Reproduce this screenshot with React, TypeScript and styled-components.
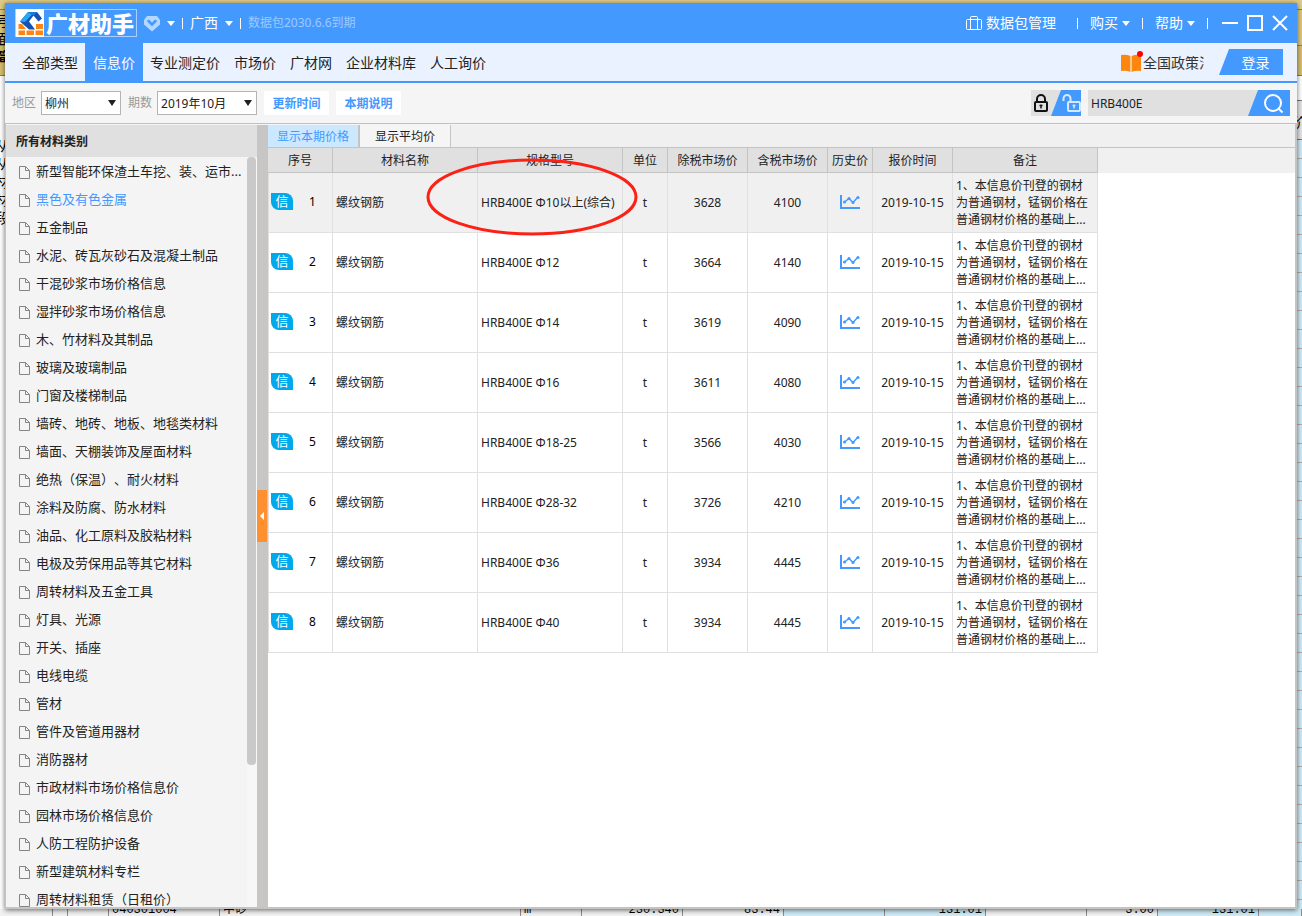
import React from "react";
import styled, { createGlobalStyle, css } from "styled-components";

const blue = "#4499ff";
const ink = "#222222";

const GlobalStyle = createGlobalStyle`
  * { box-sizing: border-box; }
  body {
    margin: 0;
    color: ${ink};
    font: 12px/16px "Noto Sans", "Noto Sans CJK SC", sans-serif;
    text-spacing-trim: space-all;
  }
  button, input, select { font: inherit; color: inherit; }
  button { border: 0; padding: 0; background: none; cursor: pointer; white-space: nowrap; }
`;

/* ---------- desktop behind the window ---------- */

const Desktop = styled.div`
  display: grid;
  grid-template: 3px minmax(0, 1fr) 7px / 5px minmax(0, 1fr) 5px;
  height: 100vh;
  overflow: hidden;
  background: #ffffff;
`;

const TopEdge = styled.div`
  grid-column: 1 / -1;
  background: #dfcb85;
`;

const SideEdge = styled.div`
  display: flex;
  flex-direction: column;
  overflow: hidden;
`;

const GoldPatch = styled.div`
  height: 73px;
  background: linear-gradient(#e0cc85 6px, #8d8262 6px 7px, #dcc67c 7px 42px, #8d8262 42px 43px, #d5bd6e 43px);
  border-bottom: 1px solid #777777;
`;

const EdgeGlyphs = styled.div<{ $space: number }>`
  display: flex;
  flex-direction: column;
  align-items: center;
  padding-top: ${(p) => p.$space}px;
  font: 14px/18px "Noto Sans CJK SC", sans-serif;
  color: #000000;
`;

const SheetHead = styled.div`
  height: 64px;
  overflow: hidden;
  background: linear-gradient(#ffffff 24px, #777777 24px 25px, #e4e4e4 25px);
  border-bottom: 1px solid #777777;
`;

const SheetRows = styled.div`
  flex: 1;
  background: repeating-linear-gradient(#cdebf6 0 18px, #b5adad 18px 19px);
`;

const SheetBottom = styled.div`
  grid-column: 1 / -1;
  display: grid;
  grid-template-columns: 53px 15px 41px 111px 301px 61px repeat(5, 101px) 71px 101px 1fr;
  overflow: hidden;
`;

const SheetCell = styled.div<{ $tint?: boolean; $right?: boolean }>`
  display: flex;
  align-items: flex-end;
  justify-content: ${(p) => (p.$right ? "flex-end" : "flex-start")};
  min-width: 0;
  height: 7px;
  padding: 0 3px;
  border-right: 1px solid #8c8c8c;
  background: ${(p) => (p.$tint ? "#cdebf6" : "#f2f2f2")};
  color: #000000;
  font: 12px/12px "Liberation Mono", "Noto Sans CJK SC", monospace;
  white-space: nowrap;
`;

/* ---------- window ---------- */

const Window = styled.div`
  position: relative;
  z-index: 1;
  display: flex;
  flex-direction: column;
  min-height: 0;
  background: #f5f5f5;
  box-shadow: 0 1px 5px rgba(0, 0, 0, 0.6);
`;

const TitleBar = styled.header`
  display: flex;
  align-items: center;
  justify-content: space-between;
  flex: none;
  height: 40px;
  padding: 0 9px 0 10px;
  background: ${blue};
  color: #ffffff;
`;

const BarGroup = styled.div<{ $gap: number }>`
  display: flex;
  align-items: center;
  gap: ${(p) => p.$gap}px;
`;

const Brand = styled.div`
  display: flex;
  align-items: center;
  width: 122px;
  height: 28px;
  border: 1px solid #a9d0ff;
  font: 900 22px/26px "Noto Sans CJK SC", sans-serif;
  white-space: nowrap;

  svg { flex: none; margin-right: 2px; }
  span { padding-bottom: 3px; }
`;

const Divider = styled.span`
  width: 1px;
  height: 11px;
  background: #ffffff;
`;

const TitleButton = styled.button`
  display: flex;
  align-items: center;
  gap: 4px;
  font-size: 14px;
  line-height: 20px;
`;

const RegionButton = styled(TitleButton)`
  gap: 7px;
`;

const PackageButton = styled(TitleButton)`
  padding-right: 9px;
`;

const WindowControls = styled.div`
  display: flex;
  gap: 9px;
  padding-left: 2px;
`;

const Expiry = styled.span`
  color: #9ccaff;
  white-space: nowrap;
`;

const Caret = styled.span`
  border: 4px solid transparent;
  border-top: 5px solid currentColor;
  border-bottom: 0;
`;

const NavBar = styled.nav`
  display: flex;
  align-items: center;
  justify-content: space-between;
  flex: none;
  height: 40px;
  padding: 0 14px 0 10px;
  border-bottom: 2px solid ${blue};
  background: #ebf2ff;
`;

const NavList = styled.div`
  display: flex;
  align-self: stretch;
`;

const NavItem = styled.button<{ $active?: boolean }>`
  padding: 1px 7px 0;
  font-size: 14px;
  line-height: 20px;
  ${(p) =>
    p.$active &&
    css`
      padding: 1px 8px 0;
      background: ${blue};
      color: #ffffff;
    `}
`;

const PolicyLink = styled.a`
  display: flex;
  align-items: center;
  color: #333333;
  font-size: 14px;
  line-height: 20px;
  text-decoration: none;

  span { width: 61px; padding-top: 1px; overflow: hidden; white-space: nowrap; }
`;

const LoginButton = styled.button`
  width: 64px;
  height: 26px;
  padding: 2px 0 0 9px;
  background: ${blue};
  clip-path: polygon(10px 0, 100% 0, 100% 100%, 0 100%);
  color: #ffffff;
  font-size: 14px;
`;

const FilterBar = styled.div`
  display: flex;
  align-items: center;
  justify-content: space-between;
  flex: none;
  height: 41px;
  padding: 0 7px;
  border-bottom: 1px solid #c0c0c0;
`;

const Field = styled.label`
  display: flex;
  align-items: center;
  gap: 5px;
  color: #999999;
`;

const SelectBox = styled.span<{ $width: number }>`
  display: grid;
  align-items: center;
  width: ${(p) => p.$width}px;
  color: ${ink};

  > * { grid-area: 1 / 1; }
  > ${Caret} { justify-self: end; margin-right: 5px; pointer-events: none; border-top-width: 6px; }

  select {
    width: 100%;
    height: 24px;
    padding: 2px 3px 0;
    border: 1px solid #b4b4b4;
    border-radius: 0;
    background: #ffffff;
    appearance: none;
  }
`;

const FlatButton = styled.button`
  width: 65px;
  height: 24px;
  padding-top: 2px;
  background: #ffffff;
  color: ${blue};
  font-weight: 700;
`;

const LockSwitch = styled.div`
  display: flex;
  height: 26px;
  background: #e0e0e0;
`;

const LockButton = styled.button<{ $on?: boolean }>`
  display: flex;
  align-items: center;
  width: ${(p) => (p.$on ? 30 : 20)}px;
  padding-left: ${(p) => (p.$on ? 11 : 3)}px;
  ${(p) =>
    p.$on &&
    css`
      background: ${blue};
      clip-path: polygon(10px 0, 100% 0, 100% 100%, 0 100%);
    `}
`;

const SearchBox = styled.form`
  display: flex;
  width: 202px;
  height: 26px;
  background: #e0e0e0;

  input {
    flex: 1;
    min-width: 0;
    padding: 2px 3px 0;
    border: 0;
    background: transparent;
  }

  button {
    display: flex;
    align-items: center;
    width: 42px;
    padding: 2px 0 0 16px;
    background: ${blue};
    clip-path: polygon(10px 0, 100% 0, 100% 100%, 0 100%);
  }
`;

/* ---------- body ---------- */

const Body = styled.div`
  display: flex;
  flex: 1;
  min-height: 0;
  padding-top: 1px;
  border: solid #c4c4c4;
  border-width: 0 2px 2px 1px;
`;

const Sidebar = styled.aside`
  display: flex;
  flex-direction: column;
  flex: none;
  width: 251px;
  background: #f4f4f4;
`;

const SidebarTitle = styled.h2`
  flex: none;
  margin: 0;
  padding: 2px 10px 0;
  background: #e0e0e0;
  font-size: 12px;
  line-height: 30px;
`;

const SidebarBody = styled.div`
  display: flex;
  flex: 1;
  min-height: 0;
`;

const CategoryList = styled.ul`
  flex: 1;
  margin: 0;
  padding: 0;
  overflow: hidden;
  list-style: none;
`;

const Category = styled.button<{ $active?: boolean }>`
  display: flex;
  align-items: center;
  gap: 6px;
  width: 100%;
  height: 28px;
  padding-left: 13px;
  color: ${(p) => (p.$active ? blue : ink)};
  font-size: 13px;
  line-height: 18px;

  svg { flex: none; margin-top: 2px; }
`;

const ScrollTrack = styled.div`
  width: 10px;
  padding-right: 1px;
  background: #f7f7f7;

  &::before {
    content: "";
    display: block;
    height: 81%;
    border-radius: 4px;
    background: #c9c9c9;
  }
`;

const Splitter = styled.div`
  display: flex;
  align-items: center;
  flex: none;
  width: 11px;
  background: #c8c6c4;

  button {
    display: flex;
    align-items: center;
    justify-content: center;
    width: 10px;
    height: 52px;
    background: #ff9030;
  }
`;

const Content = styled.main`
  display: flex;
  flex-direction: column;
  flex: 1;
  min-width: 0;
  background: #ffffff;
`;

const TabRow = styled.div`
  display: flex;
  flex: none;
  height: 23px;
  border-bottom: 1px solid #c4c4c4;
  background: #f0f0f0;
`;

const Tab = styled.button<{ $active?: boolean }>`
  width: ${(p) => (p.$active ? 92 : 91)}px;
  padding-top: 2px;
  border-right: ${(p) => (p.$active ? 2 : 1)}px solid #c4c4c4;
  background: ${(p) => (p.$active ? "#cce8ff" : "#f5f5f5")};
  color: ${(p) => (p.$active ? blue : ink)};
`;

const TableArea = styled.div`
  position: relative;
  flex: 1;
  min-height: 0;
  background: linear-gradient(#f0f0f0 25px, #ffffff 25px);
`;

const Table = styled.table`
  table-layout: fixed;
  width: 830px;
  border-spacing: 0;

  th {
    height: 25px;
    padding: 2px 0 0;
    border: solid #c4c4c4;
    border-width: 0 1px 1px 0;
    background: #e0e0e0;
    font-weight: 400;
  }

  td {
    height: 60px;
    padding: 0;
    border: solid #e0e0e0;
    border-width: 0 1px 1px 0;
    text-align: center;
  }

  td:first-child { border-left-width: 1px; }
`;

const Row = styled.tr<{ $selected?: boolean }>`
  background: ${(p) => (p.$selected ? "#f0f0f0" : "#ffffff")};
`;

const TextCell = styled.td`
  && { padding-left: 3px; text-align: left; }
`;

const NoteCell = styled.td`
  && { padding: 0 6px 0 3px; text-align: left; line-height: 17px; }
`;

const Sequence = styled.div`
  display: flex;
  align-items: center;
  gap: 16px;
  padding: 0 0 2px 2px;
  color: #000000;
`;

const Badge = styled.span`
  width: 22px;
  height: 17px;
  border-radius: 0 8px 0 8px;
  background: #00a8ec;
  color: #ffffff;
  font-size: 13px;
  line-height: 17px;
`;

const ChartButton = styled.button`
  display: block;
  height: 16px;
  margin: 0 auto;
  padding-bottom: 2px;

  svg { display: block; }
`;

const Annotation = styled.svg`
  position: absolute;
  left: 158px;
  top: 9px;
  pointer-events: none;
`;

/* ---------- drawings ---------- */

const LogoMark = () => (
  <svg width="28" height="28" viewBox="0 0 28 28" aria-hidden="true">
    <rect width="28" height="28" fill="#fff" />
    <path d="M2.5 15H6l4 5H2.5zM20 15h7v5h-7zM2.5 21.5H9V26H2.5zM10.5 21.5H18V26h-7.500zM19.500 21.500H27V26h-7.500z" fill="#ff8416" />
    <path d="M4 12.500 12 3h9l5 6.500-3.500 3-5-6-4.500 6 6 8h-6z" fill="#1453b0" />
    <path d="M4 12.500 12 3l4 2.500L9 13z" fill="#29a7f5" />
    <path d="M12 3h9l-3.500 3.500L16 5.500z" fill="#2277dd" />
  </svg>
);

const VipIcon = () => (
  <svg width="16" height="17" viewBox="0 0 16 17" aria-hidden="true">
    <path d="M3 1h10l3 4v4.500L8 16.500 0 9.500V5z" fill="#b4d7ff" />
    <path d="M4.500 6 8 9.500 11.500 6" fill="none" stroke={blue} strokeWidth="2.500" strokeLinecap="round" />
  </svg>
);

const BagIcon = () => (
  <svg width="16" height="16" viewBox="0 0 16 16" fill="none" stroke="#fff" aria-hidden="true">
    <rect x=".5" y="4.500" width="15" height="10" rx="1" />
    <path d="M4.500 14.500V2.500q0-1 1-1h5q1 0 1 1v12" />
  </svg>
);

const BookIcon = () => (
  <svg width="22" height="22" viewBox="0 0 22 22" aria-hidden="true">
    <path d="M0 4q5-1 9.500 1v16Q5 19 0 20zM10.500 5Q15 3 20 4v16q-5-1-9.500 1z" fill="#ff860d" />
    <path d="M9.500 5h1v16h-1z" fill="#ffd2a0" />
    <circle cx="19" cy="3" r="3" fill="#f00" />
  </svg>
);

const LockIcon = () => (
  <svg width="14" height="18" viewBox="0 0 14 18" fill="none" stroke="#111" strokeWidth="2" aria-hidden="true">
    <rect x="1" y="8" width="12" height="9" rx="1" />
    <path d="M3 8V5a4 4 0 0 1 8 0v3" />
    <path d="M7 10.500v4M5.500 11.500h3" strokeWidth="1.500" />
  </svg>
);

const UnlockIcon = () => (
  <svg width="19" height="18" viewBox="0 0 19 18" fill="none" stroke="#d6e9ff" strokeWidth="2" aria-hidden="true">
    <rect x="6" y="8" width="12" height="9" rx="1" />
    <path d="M1.500 7V4.500a3.500 3.500 0 0 1 7 0V8" />
    <path d="M12 10.500v4M10.500 11.500h3" strokeWidth="1.500" />
  </svg>
);

const SearchIcon = () => (
  <svg width="20" height="20" viewBox="0 0 20 20" fill="none" stroke="#fff" strokeWidth="2" aria-hidden="true">
    <circle cx="9" cy="9" r="8" />
    <path d="m14.500 14.500 4 4" />
  </svg>
);

const FileIcon = () => (
  <svg width="11" height="13" viewBox="0 0 11 13" fill="none" stroke="#858585" aria-hidden="true">
    <path d="M.5.5h6l4 4v8H.5z" />
    <path d="M6.500.5v4h4" />
  </svg>
);

const ChartIcon = () => (
  <svg width="20" height="14" viewBox="0 0 20 14" fill="none" stroke={blue} aria-hidden="true">
    <path d="M1 0v13h19" strokeWidth="2" />
    <path d="m4.500 7 4.500-3.500L13 7.500 18 2" strokeWidth="1.500" />
    <g fill={blue} stroke="none">
      <circle cx="4.500" cy="7" r="1.500" />
      <circle cx="9" cy="3.500" r="1.500" />
      <circle cx="13" cy="7.500" r="1.500" />
      <circle cx="18" cy="2.500" r="1.500" />
    </g>
  </svg>
);

const WindowIcon = ({ d }: { d: string }) => (
  <svg width="16" height="16" viewBox="0 0 16 16" fill="none" stroke="#fff" strokeWidth="2" aria-hidden="true">
    <path d={d} />
  </svg>
);

/* ---------- data ---------- */

const navItems = ["全部类型", "信息价", "专业测定价", "市场价", "广材网", "企业材料库", "人工询价"];

const categories = [
  "新型智能环保渣土车挖、装、运市...",
  "黑色及有色金属",
  "五金制品",
  "水泥、砖瓦灰砂石及混凝土制品",
  "干混砂浆市场价格信息",
  "湿拌砂浆市场价格信息",
  "木、竹材料及其制品",
  "玻璃及玻璃制品",
  "门窗及楼梯制品",
  "墙砖、地砖、地板、地毯类材料",
  "墙面、天棚装饰及屋面材料",
  "绝热（保温）、耐火材料",
  "涂料及防腐、防水材料",
  "油品、化工原料及胶粘材料",
  "电极及劳保用品等其它材料",
  "周转材料及五金工具",
  "灯具、光源",
  "开关、插座",
  "电线电缆",
  "管材",
  "管件及管道用器材",
  "消防器材",
  "市政材料市场价格信息价",
  "园林市场价格信息价",
  "人防工程防护设备",
  "新型建筑材料专栏",
  "周转材料租赁（日租价）",
];

const columns: [string, number][] = [
  ["序号", 65],
  ["材料名称", 145],
  ["规格型号", 145],
  ["单位", 45],
  ["除税市场价", 80],
  ["含税市场价", 80],
  ["历史价", 45],
  ["报价时间", 80],
  ["备注", 145],
];

const rows: [string, number, number][] = [
  ["HRB400E Φ10以上(综合)", 3628, 4100],
  ["HRB400E Φ12", 3664, 4140],
  ["HRB400E Φ14", 3619, 4090],
  ["HRB400E Φ16", 3611, 4080],
  ["HRB400E Φ18-25", 3566, 4030],
  ["HRB400E Φ28-32", 3726, 4210],
  ["HRB400E Φ36", 3934, 4445],
  ["HRB400E Φ40", 3934, 4445],
];

const note = "1、本信息价刊登的钢材为普通钢材，锰钢价格在普通钢材价格的基础上...";

export default function App() {
  return (
    <>
      <GlobalStyle />
      <Desktop>
        <TopEdge />
        <SideEdge aria-hidden="true">
          <GoldPatch>
            <EdgeGlyphs $space={8}>
              <span>号</span>
              <span>面</span>
              <b>简</b>
            </EdgeGlyphs>
          </GoldPatch>
          <EdgeGlyphs $space={60}>
            <span>从</span>
            <span>从</span>
            <span>材</span>
            <span>材</span>
            <span>段</span>
          </EdgeGlyphs>
        </SideEdge>

        <Window>
          <TitleBar>
            <BarGroup $gap={7}>
              <Brand>
                <LogoMark />
                <span>广材助手</span>
              </Brand>
              <VipIcon />
              <Caret />
              <Divider />
              <RegionButton>
                广西 <Caret />
              </RegionButton>
              <Divider />
              <Expiry>数据包2030.6.6到期</Expiry>
            </BarGroup>
            <BarGroup $gap={12}>
              <PackageButton>
                <BagIcon />
                数据包管理
              </PackageButton>
              <Divider />
              <TitleButton>
                购买 <Caret />
              </TitleButton>
              <Divider />
              <TitleButton>
                帮助 <Caret />
              </TitleButton>
              <Divider />
              <WindowControls>
                <TitleButton aria-label="最小化">
                  <WindowIcon d="M0 8h16" />
                </TitleButton>
                <TitleButton aria-label="最大化">
                  <WindowIcon d="M1 1h14v14H1z" />
                </TitleButton>
                <TitleButton aria-label="关闭">
                  <WindowIcon d="m1 1 14 14M15 1 1 15" />
                </TitleButton>
              </WindowControls>
            </BarGroup>
          </TitleBar>

          <NavBar>
            <NavList>
              {navItems.map((item) => (
                <NavItem key={item} $active={item === "信息价"}>
                  {item}
                </NavItem>
              ))}
            </NavList>
            <BarGroup $gap={15}>
              <PolicyLink href="#policy">
                <BookIcon />
                <span>全国政策法</span>
              </PolicyLink>
              <LoginButton>登录</LoginButton>
            </BarGroup>
          </NavBar>

          <FilterBar>
            <BarGroup $gap={7}>
              <Field>
                地区
                <SelectBox $width={80}>
                  <select defaultValue="柳州">
                    <option>柳州</option>
                  </select>
                  <Caret />
                </SelectBox>
              </Field>
              <Field>
                期数
                <SelectBox $width={100}>
                  <select defaultValue="2019年10月">
                    <option>2019年10月</option>
                  </select>
                  <Caret />
                </SelectBox>
              </Field>
              <FlatButton>更新时间</FlatButton>
              <FlatButton>本期说明</FlatButton>
            </BarGroup>
            <BarGroup $gap={7}>
              <LockSwitch>
                <LockButton aria-label="锁定">
                  <LockIcon />
                </LockButton>
                <LockButton $on aria-label="解锁">
                  <UnlockIcon />
                </LockButton>
              </LockSwitch>
              <SearchBox onSubmit={(e) => e.preventDefault()}>
                <input aria-label="搜索" defaultValue="HRB400E" />
                <button aria-label="查询">
                  <SearchIcon />
                </button>
              </SearchBox>
            </BarGroup>
          </FilterBar>

          <Body>
            <Sidebar>
              <SidebarTitle>所有材料类别</SidebarTitle>
              <SidebarBody>
                <CategoryList>
                  {categories.map((name, i) => (
                    <li key={name}>
                      <Category $active={i === 1}>
                        <FileIcon />
                        {name}
                      </Category>
                    </li>
                  ))}
                </CategoryList>
                <ScrollTrack />
              </SidebarBody>
            </Sidebar>
            <Splitter>
              <button aria-label="收起">
                <svg width="4" height="8" viewBox="0 0 4 8" aria-hidden="true">
                  <path d="M4 0v8L0 4z" fill="#fff" />
                </svg>
              </button>
            </Splitter>
            <Content>
              <TabRow>
                <Tab $active>显示本期价格</Tab>
                <Tab>显示平均价</Tab>
              </TabRow>
              <TableArea>
                <Table>
                  <colgroup>
                    {columns.map(([name, width]) => (
                      <col key={name} width={width} />
                    ))}
                  </colgroup>
                  <thead>
                    <tr>
                      {columns.map(([name]) => (
                        <th key={name} scope="col">
                          {name}
                        </th>
                      ))}
                    </tr>
                  </thead>
                  <tbody>
                    {rows.map(([spec, net, gross], i) => (
                      <Row key={spec} $selected={i === 0}>
                        <td>
                          <Sequence>
                            <Badge>信</Badge>
                            {i + 1}
                          </Sequence>
                        </td>
                        <TextCell>螺纹钢筋</TextCell>
                        <TextCell>{spec}</TextCell>
                        <td>t</td>
                        <td>{net}</td>
                        <td>{gross}</td>
                        <td>
                          <ChartButton aria-label="历史价">
                            <ChartIcon />
                          </ChartButton>
                        </td>
                        <td>2019-10-15</td>
                        <NoteCell>{note}</NoteCell>
                      </Row>
                    ))}
                  </tbody>
                </Table>
                <Annotation width="212" height="80" viewBox="0 0 212 80" aria-hidden="true">
                  <ellipse cx="106" cy="40" rx="104" ry="37" fill="none" stroke="#fb2115" strokeWidth="3" />
                </Annotation>
              </TableArea>
            </Content>
          </Body>
        </Window>

        <SideEdge aria-hidden="true">
          <GoldPatch />
          <SheetHead>
            <EdgeGlyphs $space={36}>
              <span>价</span>
            </EdgeGlyphs>
          </SheetHead>
          <SheetRows />
        </SideEdge>

        <SheetBottom aria-hidden="true">
          <SheetCell />
          <SheetCell />
          <SheetCell />
          <SheetCell>040301004</SheetCell>
          <SheetCell>中砂</SheetCell>
          <SheetCell>m</SheetCell>
          <SheetCell $right>230.340</SheetCell>
          <SheetCell $right>83.44</SheetCell>
          <SheetCell $tint />
          <SheetCell $tint $right>131.01</SheetCell>
          <SheetCell />
          <SheetCell $right>3.00</SheetCell>
          <SheetCell $tint $right>131.01</SheetCell>
          <SheetCell $tint />
        </SheetBottom>
      </Desktop>
    </>
  );
}
